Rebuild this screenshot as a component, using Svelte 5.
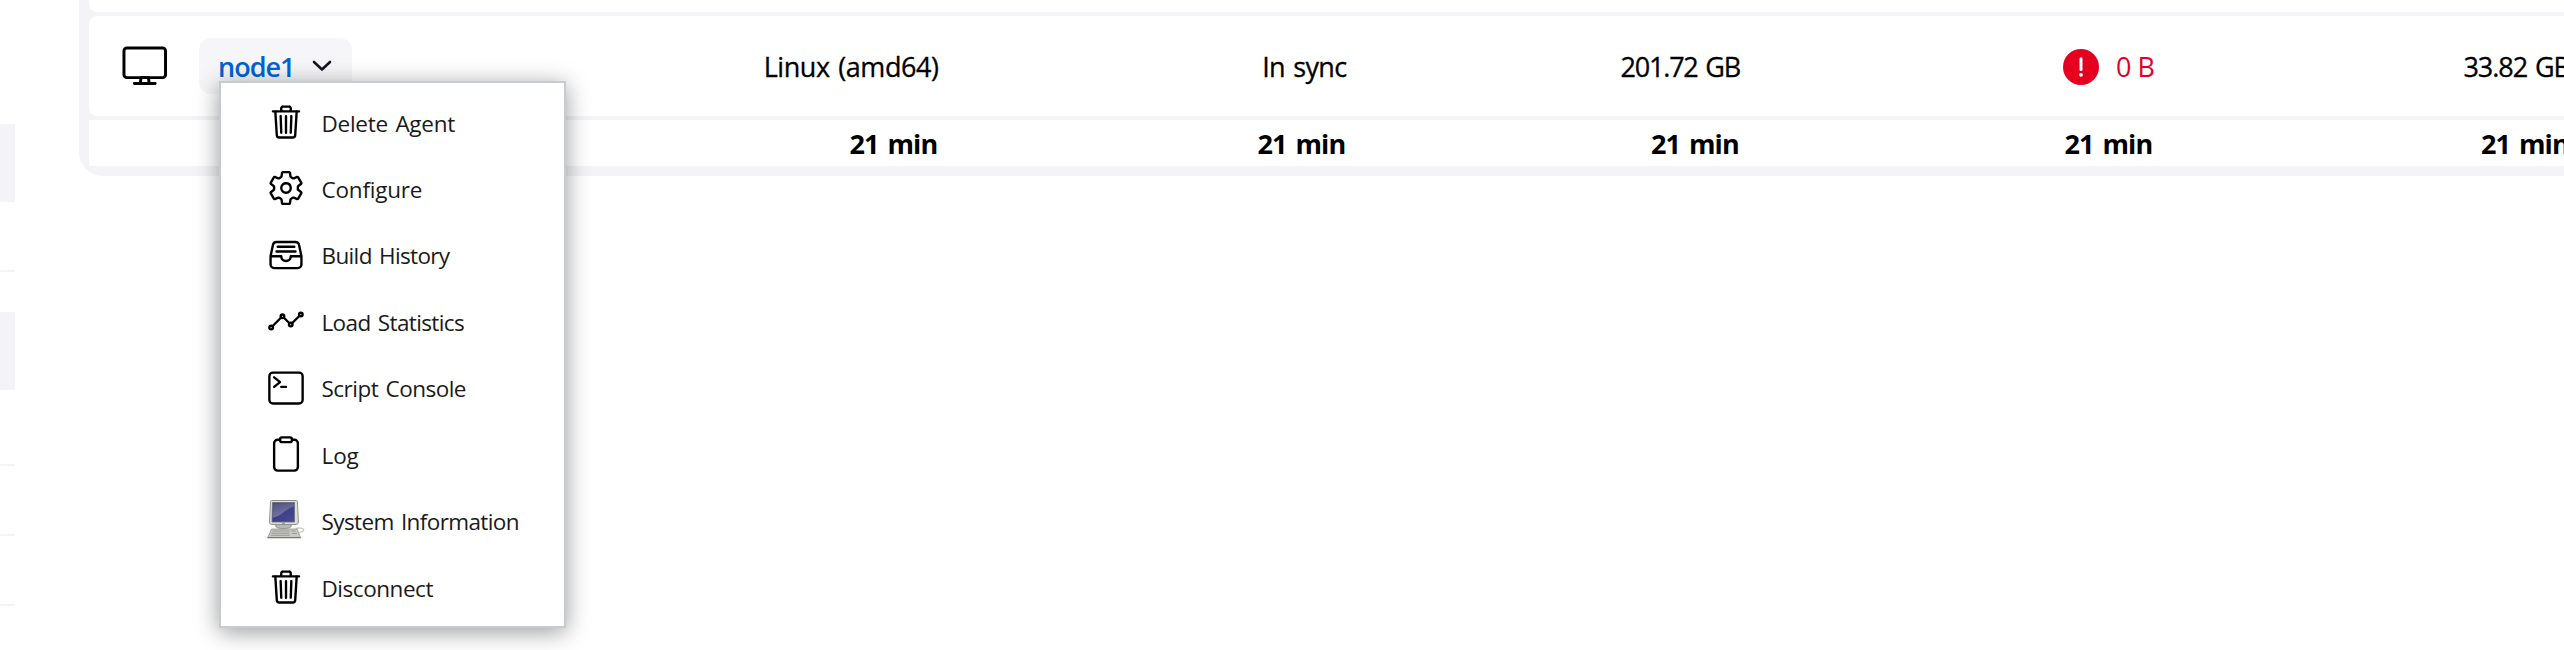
<script>
  const items = [
    { label: 'Delete Agent', icon: 'trash', spacing: -0.27 },
    { label: 'Configure', icon: 'gear', spacing: -0.21 },
    { label: 'Build History', icon: 'tray', spacing: -0.64 },
    { label: 'Load Statistics', icon: 'chart', spacing: -0.62 },
    { label: 'Script Console', icon: 'terminal', spacing: -0.52 },
    { label: 'Log', icon: 'clipboard', spacing: -0.1 },
    { label: 'System Information', icon: 'computer', spacing: -0.61 },
    { label: 'Disconnect', icon: 'trash', spacing: -0.46 }
  ];
  const cells = [
    { value: 'Linux (amd64)', spacing: -0.44 },
    { value: 'In sync', spacing: -0.67 },
    { value: '201.72 GB', spacing: -1.22 },
    { value: '0 B', spacing: -1.5, error: true },
    { value: '33.82 GB', spacing: -1.05 }
  ];
</script>

{#snippet glyph(name)}
  {#if name === 'computer'}
    <svg class="icon computer" viewBox="0 0 38 40">
      <defs>
        <linearGradient id="screen" x1="0" y1="0" x2="1" y2="1">
          <stop offset="0" stop-color="#34346f" />
          <stop offset="1" stop-color="#4a4a98" />
        </linearGradient>
        <linearGradient id="glare" x1="0" y1="0" x2="0.4" y2="1">
          <stop offset="0" stop-color="#5c5c86" />
          <stop offset="1" stop-color="#8a8ab4" />
        </linearGradient>
      </defs>
      <path d="M29 29.5c3-1 8-.5 7.6 1.8-.3 1.8-3.6 1.6-4.6 2.200" fill="none" stroke="#c9cac6" stroke-width="1.4" />
      <ellipse cx="16.500" cy="27" rx="8" ry="2.600" fill="#b9bab6" stroke="#888a85" stroke-width=".8" />
      <path d="M4.600 1.500h24.800q1 0 1 1l1 20.500q0 2.500-2.500 2.500H5q-2.500 0-2.500-2.500l1-20.500q0-1 1.100-1z" fill="#dededa" stroke="#90928c" />
      <path d="M5.500 3.500h22v19.500h-22.500z" fill="url(#screen)" stroke="#6b6c7c" stroke-width=".8" />
      <path d="M6.200 4.200h20.600v3.300C18 10 15 17 5.800 18.800z" fill="url(#glare)" opacity=".75" />
      <path d="M15 24.300h3" stroke="#777" stroke-width=".8" />
      <path d="M4.500 30h25.500l3.500 8.500H.8z" fill="#c8c9c4" stroke="#8f918b" stroke-width=".8" />
      <path d="M5.500 32h17M4.500 34.200h18M3.800 36.300h19M24.500 32h4M25 34.500h5" stroke="#8d8f89" stroke-width=".8" />
      <path d="M.5 38.800h33.300" stroke="#6a6c66" stroke-width="1.100" />
    </svg>
  {:else}
    <svg class="icon line" viewBox="0 0 512 512">
      {#if name === 'trash'}
        <path d="M112 112l20 320c.95 18.49 14.4 32 32 32h184c17.67 0 30.87-13.51 32-32l20-320M80 112h352M192 112V72a23.930 23.930 0 0124-24h80a23.930 23.930 0 0124 24v40M256 176v224M184 176l8 224M328 176l-8 224" />
      {:else if name === 'gear'}
        <path d="M262.29 192.31a64 64 0 1057.4 57.4 64.13 64.13 0 00-57.4-57.4zM416.39 256a154.34 154.34 0 01-1.53 20.79l45.21 35.46a10.81 10.81 0 012.45 13.75l-42.77 74a10.81 10.81 0 01-13.14 4.59l-44.9-18.08a16.11 16.11 0 00-15.17 1.75A164.48 164.48 0 01325 400.8a15.94 15.94 0 00-8.82 12.14l-6.73 47.89a11.08 11.08 0 01-10.68 9.17h-85.54a11.11 11.11 0 01-10.69-8.87l-6.72-47.82a16.07 16.07 0 00-9-12.22 155.3 155.3 0 01-21.46-12.57 16 16 0 00-15.11-1.71l-44.89 18.07a10.81 10.81 0 01-13.14-4.58l-42.77-74a10.8 10.8 0 012.45-13.75l38.21-30a16.05 16.05 0 006-14.08c-.36-4.17-.58-8.33-.58-12.5s.21-8.27.58-12.35a16 16 0 00-6.07-13.94l-38.19-30A10.81 10.81 0 0149.48 186l42.77-74a10.81 10.81 0 0113.14-4.59l44.9 18.08a16.11 16.11 0 0015.17-1.75A164.48 164.48 0 01187 111.2a15.94 15.94 0 008.82-12.14l6.73-47.89A11.08 11.08 0 01213.23 42h85.54a11.11 11.11 0 0110.69 8.87l6.72 47.82a16.07 16.07 0 009 12.22 155.3 155.3 0 0121.46 12.57 16 16 0 0015.11 1.71l44.89-18.07a10.81 10.81 0 0113.14 4.58l42.77 74a10.8 10.8 0 01-2.45 13.75l-38.21 30a16.05 16.05 0 00-6.05 14.08c.33 4.14.55 8.3.55 12.47z" />
      {:else if name === 'tray'}
        <path d="M384 80H128c-26 0-43 14-48 40L48 272v112a48.14 48.14 0 0048 48h320a48.14 48.14 0 0048-48V272l-32-152c-5-27-23-40-48-40zM48 272h144M320 272h144M192 272a64 64 0 00128 0M144 144h224M128 208h256" />
      {:else if name === 'chart'}
        <path d="M344 280l88-88M232 216l64 64M80 320l104-104" />
        <circle cx="456" cy="168" r="24" />
        <circle cx="320" cy="304" r="24" />
        <circle cx="208" cy="192" r="24" />
        <circle cx="56" cy="344" r="24" />
      {:else if name === 'terminal'}
        <rect x="32" y="48" width="448" height="416" rx="48" />
        <path d="M96 112l80 64-80 64M192 240h64" />
      {:else if name === 'clipboard'}
        <path d="M336 64h32a48 48 0 0148 48v320a48 48 0 01-48 48H144a48 48 0 01-48-48V112a48 48 0 0148-48h32" />
        <rect x="176" y="32" width="160" height="64" rx="26.13" />
      {/if}
    </svg>
  {/if}
{/snippet}

<div class="page">
  <aside class="side">
    <div class="block first"></div>
    <div class="rule r1"></div>
    <div class="block second"></div>
    <div class="rule r2"></div>
    <div class="rule r3"></div>
    <div class="rule r3"></div>
  </aside>

  <main class="table">
    <div class="row previous"></div>
    <div class="row agent">
      <svg class="monitor" viewBox="0 0 512 512">
        <rect x="32" y="64" width="448" height="320" rx="32" />
        <path d="M304 448l-8-64h-80l-8 64zM368 448H144" />
      </svg>
      <div class="name">
        <a class="link" href="#node1">node1</a>
        <svg class="chevron" viewBox="0 0 20 12"><path d="M2 2l8 7.500 8-7.500" /></svg>
        <nav class="menu">
          {#each items as item}
            <div class="item">
              {@render glyph(item.icon)}
              <span class="label" style="letter-spacing:{item.spacing}px">{item.label}</span>
            </div>
          {/each}
        </nav>
      </div>
      {#each cells as cell}
        <div class="cell" class:error={cell.error}>
          {#if cell.error}
            <svg class="alert" viewBox="0 0 36 36">
              <circle cx="18" cy="18" r="18" />
              <path d="M18 9.800v10.700" />
              <circle class="dot" cx="18" cy="25.800" r="1.900" />
            </svg>
          {/if}
          <span class="value" style="letter-spacing:{cell.spacing}px">{cell.value}</span>
        </div>
      {/each}
    </div>
    <div class="row footer">
      <div></div>
      <div></div>
      {#each cells as _}
        <div class="cell">21 min</div>
      {/each}
    </div>
  </main>
</div>

<style>
  :global(body) {
    overflow: hidden;
    background: #fff;
  }
  .page {
    display: flex;
    height: 650px;
    overflow: hidden;
    font-family: 'Open Sans', 'Noto Sans', sans-serif;
    color: #000;
  }
  .side {
    flex: none;
    width: 15px;
    margin-right: 64px;
    padding-top: 124px;
  }
  .block,
  .rule {
    background: #f3f3f8;
  }
  .block {
    height: 78px;
  }
  .rule {
    height: 2px;
  }
  .r1 {
    margin: 68px 0 40px;
  }
  .r2 {
    margin-top: 74px;
  }
  .r3 {
    margin-top: 68px;
  }
  .table {
    flex: none;
    box-sizing: border-box;
    width: 2600px;
    height: 176px;
    padding: 0 10px 10px;
    border-radius: 0 0 0 24px;
    background: #f3f3f8;
    display: flex;
    flex-direction: column;
    gap: 4px;
  }
  .row {
    background: #fff;
    display: grid;
    grid-template-columns: 110px 250px 489.5px 408px 393.5px 413.5px 416.5px;
    align-items: center;
    font-size: 27px;
    line-height: 38px;
    word-spacing: 2px;
  }
  .previous {
    height: 12px;
    border-radius: 0 0 8px 8px;
  }
  .agent {
    height: 100px;
    border-radius: 8px;
    -webkit-text-stroke: 0.3px currentColor;
  }
  .footer {
    height: 46px;
    font-weight: 700;
    letter-spacing: -0.8px;
    word-spacing: 2.5px;
  }
  .monitor {
    width: 47.5px;
    height: 47.5px;
    margin-left: 32px;
    fill: none;
    stroke: #000;
    stroke-width: 32;
    stroke-linejoin: round;
    stroke-linecap: round;
  }
  .name {
    position: relative;
    box-sizing: border-box;
    width: 153px;
    height: 56px;
    padding: 0 20px 0 19px;
    border-radius: 12px;
    background: #f6f6f9;
    display: flex;
    align-items: center;
    justify-content: space-between;
  }
  .link {
    padding-top: 2px;
    color: #0062d6;
    font-size: 27px;
    font-weight: 600;
    letter-spacing: -1px;
    text-decoration: none;
    -webkit-text-stroke: 0;
  }
  .chevron {
    width: 20px;
    height: 12px;
    fill: none;
    stroke: #14141f;
    stroke-width: 2.6;
    stroke-linecap: round;
    stroke-linejoin: round;
  }
  .cell {
    padding-top: 1px;
    display: flex;
    justify-content: flex-end;
    align-items: center;
    white-space: nowrap;
  }
  .footer .cell {
    padding-right: 1px;
  }
  .error {
    gap: 17px;
    color: #e6001f;
    -webkit-text-stroke: 0;
  }
  .alert {
    width: 36px;
    height: 36px;
    margin-top: 1px;
    fill: #e6001f;
  }
  .alert path {
    stroke: #fff;
    stroke-width: 3;
    stroke-linecap: round;
  }
  .alert .dot {
    fill: #fff;
  }
  .menu {
    position: absolute;
    left: 20px;
    top: 43px;
    z-index: 1;
    box-sizing: border-box;
    width: 347px;
    height: 547px;
    padding: 5.8px 0;
    border: 2px solid #c3cdd1;
    background: #fff;
    box-shadow: 0 4px 22px rgba(0, 0, 0, 0.4);
    -webkit-text-stroke: 0;
  }
  .item {
    height: 66.45px;
    padding-left: 46px;
    display: flex;
    align-items: center;
    gap: 16.5px;
  }
  .icon {
    flex: none;
    width: 38px;
    height: 38px;
  }
  .computer {
    height: 40px;
    margin-top: -3px;
  }
  .line {
    fill: none;
    stroke: #000;
    stroke-width: 32;
    stroke-linecap: round;
    stroke-linejoin: round;
  }
  .label {
    padding-top: 3px;
    font-size: 22.5px;
    line-height: 32px;
    color: #1a1a1a;
    white-space: nowrap;
  }
</style>
